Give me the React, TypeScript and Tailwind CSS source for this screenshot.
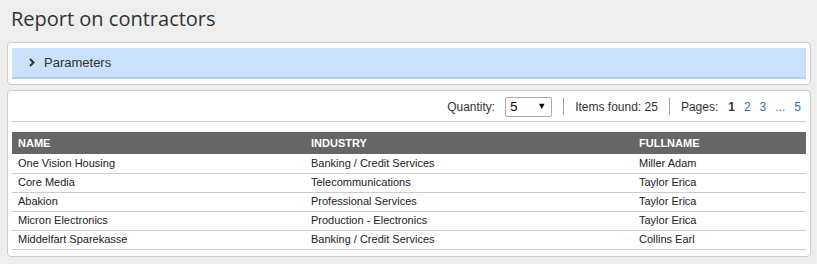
import React from "react";

const rows = [
  ["One Vision Housing", "Banking / Credit Services", "Miller Adam"],
  ["Core Media", "Telecommunications", "Taylor Erica"],
  ["Abakion", "Professional Services", "Taylor Erica"],
  ["Micron Electronics", "Production - Electronics", "Taylor Erica"],
  ["Middelfart Sparekasse", "Banking / Credit Services", "Collins Earl"],
];

export default function App() {
  return (
    <div className="w-[817px] h-[264px] bg-[#eeeeee] overflow-hidden" style={{ fontFamily: '"Liberation Sans", Arial, sans-serif' }}>
      <div className="pl-[11px] pt-[6px] h-[42px] text-[20px] leading-[26px] text-[#333333]" style={{ fontFamily: '"Open Sans", sans-serif' }}>
        Report on contractors
      </div>
      <div className="ml-[7px] mr-[6px] bg-white border border-[#cccccc] rounded-[4px] px-[4px] py-[5px]">
        <div className="h-[31px] bg-[#cbe0fb] border-b-2 border-[#b8cde6] flex items-center pl-[16px] text-[13px] text-[#333333]">
          <svg width="8" height="9" viewBox="0 0 8 9" className="mr-[8px]">
            <path d="M2 1 L5.5 4.5 L2 8" fill="none" stroke="#333" strokeWidth="2" />
          </svg>
          Parameters
        </div>
      </div>
      <div className="ml-[7px] mr-[6px] mt-[5px] bg-white border border-[#cccccc] rounded-[4px] px-[4px] pb-[6px]">
        <div className="h-[31px] border-b border-[#cccccc] flex items-center justify-end text-[12px] text-[#333333] pr-[5px] pt-[1px]">
          <span>Quantity:</span>
          <div className="ml-[10px] w-[47px] h-[20px] border border-[#aaaaaa] rounded-[2px] flex items-center justify-between pl-[4px] pr-[5px] text-[13px] text-black">
            <span>5</span>
            <span className="text-[9px]">▼</span>
          </div>
          <span className="mx-[11px] w-px h-[17px] bg-[#9aa5b1]" />
          <span>Items found: 25</span>
          <span className="mx-[11px] w-px h-[17px] bg-[#9aa5b1]" />
          <span>Pages:</span>
          <span className="ml-[10px] font-bold text-[#333]">1</span>
          <span className="ml-[9px] text-[#2a6ebb]">2</span>
          <span className="ml-[9px] text-[#2a6ebb]">3</span>
          <span className="ml-[9px] text-[#2a6ebb]">...</span>
          <span className="ml-[9px] text-[#2a6ebb]">5</span>
        </div>
        <table className="mt-[10px] w-full border-collapse text-[11px] text-[#222222]">
          <thead>
            <tr className="bg-[#666666] text-white font-bold h-[22px]">
              <td className="pl-[6px] w-[293px]">NAME</td>
              <td className="pl-[6px] w-[328px]">INDUSTRY</td>
              <td className="pl-[6px]">FULLNAME</td>
            </tr>
          </thead>
          <tbody>
            {rows.map((r, i) => (
              <tr key={i} className="h-[19px] border-b border-[#cccccc]">
                <td className="pl-[6px]">{r[0]}</td>
                <td className="pl-[6px]">{r[1]}</td>
                <td className="pl-[6px]">{r[2]}</td>
              </tr>
            ))}
          </tbody>
        </table>
      </div>
    </div>
  );
}
